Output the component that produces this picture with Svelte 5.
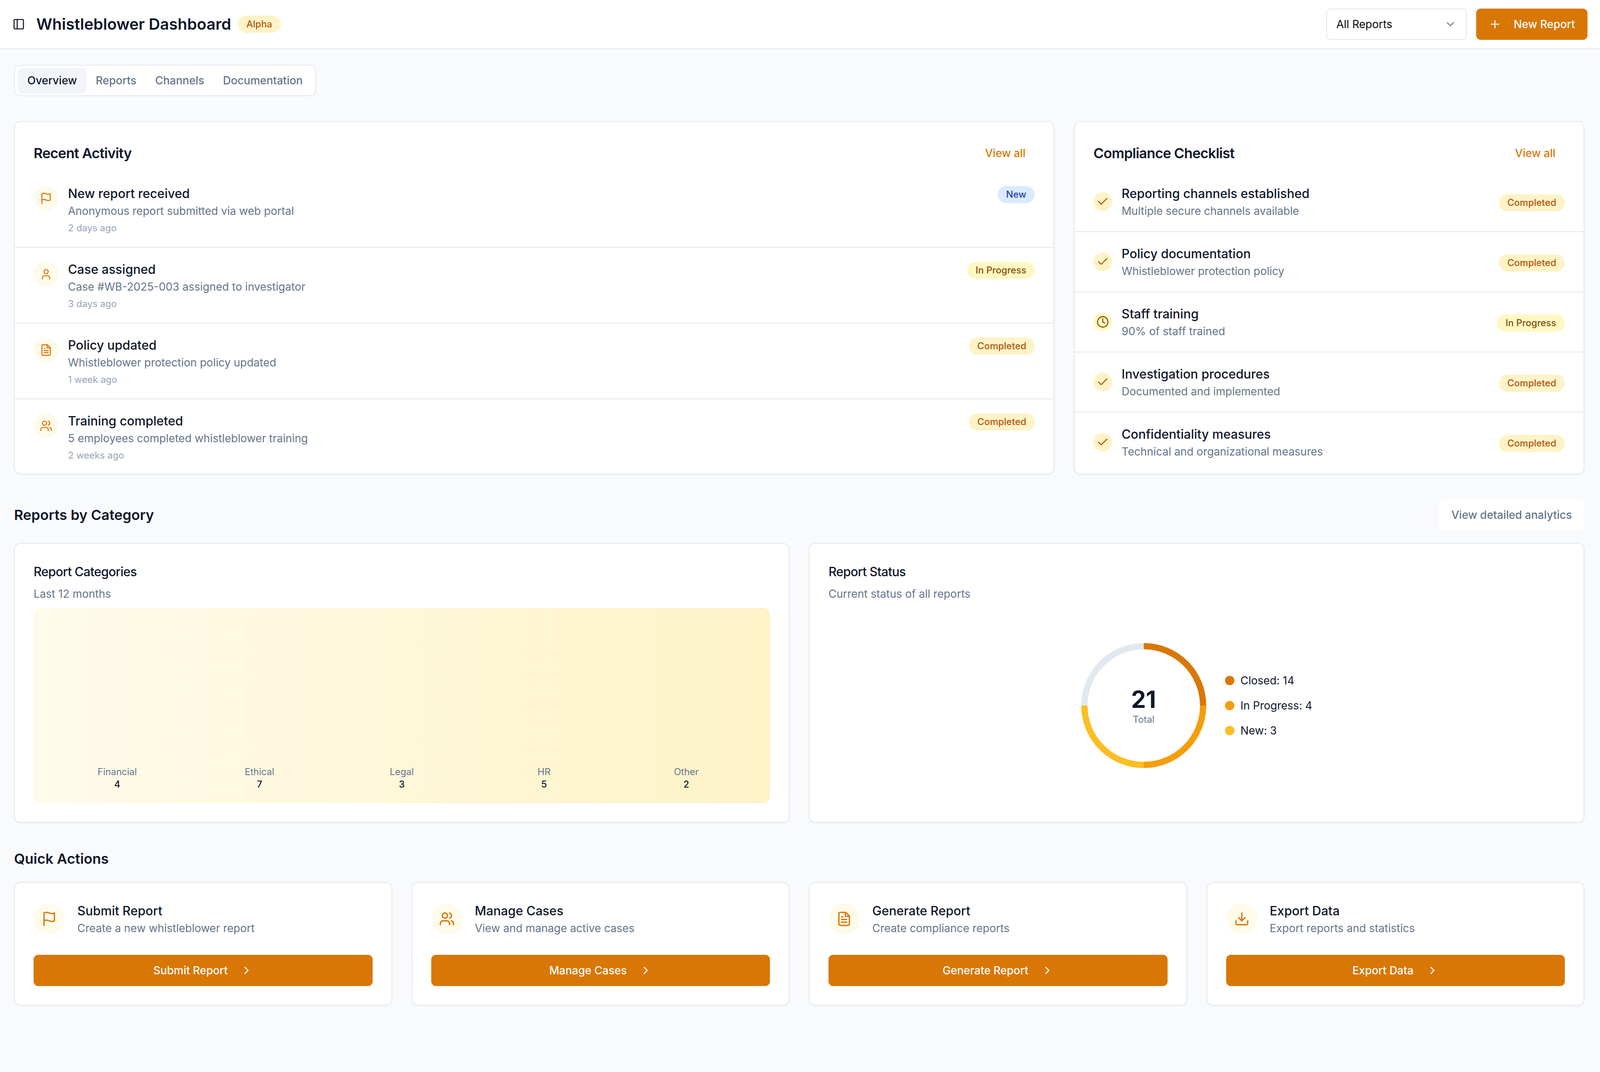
<script>
  const icons = {
    panel: '<rect width="18" height="18" x="3" y="3" rx="2"/><path d="M9 3v18"/>',
    plus: '<path d="M5 12h14"/><path d="M12 5v14"/>',
    down: '<path d="m6 9 6 6 6-6"/>',
    right: '<path d="m9 18 6-6-6-6"/>',
    flag: '<path d="M4 15s1-1 4-1 5 2 8 2 4-1 4-1V3s-1 1-4 1-5-2-8-2-4 1-4 1z"/><line x1="4" x2="4" y1="22" y2="15"/>',
    user: '<path d="M19 21v-2a4 4 0 0 0-4-4H9a4 4 0 0 0-4 4v2"/><circle cx="12" cy="7" r="4"/>',
    file: '<path d="M14.5 2H6a2 2 0 0 0-2 2v16a2 2 0 0 0 2 2h12a2 2 0 0 0 2-2V7.5L14.5 2z"/><polyline points="14 2 14 8 20 8"/><line x1="16" x2="8" y1="13" y2="13"/><line x1="16" x2="8" y1="17" y2="17"/><line x1="10" x2="8" y1="9" y2="9"/>',
    users: '<path d="M16 21v-2a4 4 0 0 0-4-4H6a4 4 0 0 0-4 4v2"/><circle cx="9" cy="7" r="4"/><path d="M22 21v-2a4 4 0 0 0-3-3.87"/><path d="M16 3.13a4 4 0 0 1 0 7.75"/>',
    check: '<polyline points="20 6 9 17 4 12"/>',
    clock: '<circle cx="12" cy="12" r="10"/><polyline points="12 6 12 12 16 14"/>',
    download: '<path d="M21 15v4a2 2 0 0 1-2 2H5a2 2 0 0 1-2-2v-4"/><polyline points="7 10 12 15 17 10"/><line x1="12" x2="12" y1="15" y2="3"/>'
  };

  const tabs = ['Overview', 'Reports', 'Channels', 'Documentation'];

  const activity = [
    { icon: 'flag', title: 'New report received', desc: 'Anonymous report submitted via web portal', time: '2 days ago', status: 'New' },
    { icon: 'user', title: 'Case assigned', desc: 'Case #WB-2025-003 assigned to investigator', time: '3 days ago', status: 'In Progress' },
    { icon: 'file', title: 'Policy updated', desc: 'Whistleblower protection policy updated', time: '1 week ago', status: 'Completed' },
    { icon: 'users', title: 'Training completed', desc: '5 employees completed whistleblower training', time: '2 weeks ago', status: 'Completed' }
  ];

  const checklist = [
    { title: 'Reporting channels established', desc: 'Multiple secure channels available', status: 'Completed' },
    { title: 'Policy documentation', desc: 'Whistleblower protection policy', status: 'Completed' },
    { title: 'Staff training', desc: '90% of staff trained', status: 'In Progress' },
    { title: 'Investigation procedures', desc: 'Documented and implemented', status: 'Completed' },
    { title: 'Confidentiality measures', desc: 'Technical and organizational measures', status: 'Completed' }
  ];

  const categories = [
    { name: 'Financial', count: 4 },
    { name: 'Ethical', count: 7 },
    { name: 'Legal', count: 3 },
    { name: 'HR', count: 5 },
    { name: 'Other', count: 2 }
  ];

  const legend = [
    { label: 'Closed: 14', color: '#d97706' },
    { label: 'In Progress: 4', color: '#f59e0b' },
    { label: 'New: 3', color: '#fbbf24' }
  ];

  const actions = [
    { icon: 'flag', title: 'Submit Report', desc: 'Create a new whistleblower report' },
    { icon: 'users', title: 'Manage Cases', desc: 'View and manage active cases' },
    { icon: 'file', title: 'Generate Report', desc: 'Create compliance reports' },
    { icon: 'download', title: 'Export Data', desc: 'Export reports and statistics' }
  ];

  const badgeClass = (status) => status.toLowerCase().replace(' ', '-');
</script>

{#snippet icon(name)}
  <svg class="icon" viewBox="0 0 24 24" fill="none" stroke="currentColor" stroke-width="2" stroke-linecap="round" stroke-linejoin="round">
    {@html icons[name]}
  </svg>
{/snippet}

<div class="page">
  <header class="topbar">
    <div class="topbar-left">
      <span class="toggle">{@render icon('panel')}</span>
      <h1>Whistleblower Dashboard</h1>
      <span class="badge completed">Alpha</span>
    </div>
    <div class="topbar-right">
      <div class="select">
        <span>All Reports</span>
        <span class="chevron">{@render icon('down')}</span>
      </div>
      <button class="primary new-report">{@render icon('plus')} New Report</button>
    </div>
  </header>

  <main>
    <div class="tabs">
      {#each tabs as tab, i}
        <span class="tab" class:active={i === 0}>{tab}</span>
      {/each}
    </div>

    <div class="top-grid">
      <section class="card">
        <div class="card-head">
          <h2>Recent Activity</h2>
          <span class="view-all">View all</span>
        </div>
        {#each activity as item}
          <div class="row activity-row">
            <span class="circle activity-icon">{@render icon(item.icon)}</span>
            <div class="row-text">
              <div class="row-title">{item.title}</div>
              <div class="row-desc">{item.desc}</div>
              <div class="row-time">{item.time}</div>
            </div>
            <span class="badge {badgeClass(item.status)}">{item.status}</span>
          </div>
        {/each}
      </section>

      <section class="card">
        <div class="card-head">
          <h2>Compliance Checklist</h2>
          <span class="view-all">View all</span>
        </div>
        {#each checklist as item}
          <div class="row check-row">
            <span class="circle check-icon" class:pending={item.status === 'In Progress'}>
              {@render icon(item.status === 'In Progress' ? 'clock' : 'check')}
            </span>
            <div class="row-text">
              <div class="row-title">{item.title}</div>
              <div class="row-desc">{item.desc}</div>
            </div>
            <span class="badge {badgeClass(item.status)}">{item.status}</span>
          </div>
        {/each}
      </section>
    </div>

    <div class="section-head">
      <h3>Reports by Category</h3>
      <button class="outline">View detailed analytics</button>
    </div>

    <div class="chart-grid">
      <section class="card chart-card">
        <div class="chart-title">Report Categories</div>
        <div class="chart-sub">Last 12 months</div>
        <div class="bars">
          {#each categories as cat}
            <div class="bar-col">
              <div class="bar-label">{cat.name}</div>
              <div class="bar-value">{cat.count}</div>
            </div>
          {/each}
        </div>
      </section>

      <section class="card chart-card">
        <div class="chart-title">Report Status</div>
        <div class="chart-sub">Current status of all reports</div>
        <div class="status-area">
          <div class="donut">
            <div class="donut-inner">
              <div class="donut-num">21</div>
              <div class="donut-label">Total</div>
            </div>
          </div>
          <div class="legend">
            {#each legend as entry}
              <div class="legend-item">
                <span class="dot" style="background: {entry.color}"></span>
                {entry.label}
              </div>
            {/each}
          </div>
        </div>
      </section>
    </div>

    <h3 class="quick-head">Quick Actions</h3>

    <div class="quick-grid">
      {#each actions as action}
        <section class="card quick-card">
          <div class="quick-top">
            <span class="circle quick-icon">{@render icon(action.icon)}</span>
            <div>
              <div class="row-title">{action.title}</div>
              <div class="row-desc">{action.desc}</div>
            </div>
          </div>
          <button class="primary quick-btn">{action.title} {@render icon('right')}</button>
        </section>
      {/each}
    </div>
  </main>
</div>

<style>
  :global(body) {
    margin: 0;
    background: #f8fafc;
    font-family: Inter, "Noto Sans", sans-serif;
    color: #0f172a;
  }

  /* no fixed width: the sandbox window reports 4096px wide, not 4436px, so the grids follow the window */
  .page { min-height: 2744px; }
  h1, h2, h3 { margin: 0; }
  button { font-family: inherit; cursor: pointer; }

  .icon { width: 32px; height: 32px; display: block; flex: none; }

  .topbar {
    height: 124px;
    background: #fff;
    border-bottom: 2px solid #e4e4e7;
    display: flex;
    align-items: center;
    justify-content: space-between;
    padding: 0 32px;
  }
  .topbar-left { display: flex; align-items: center; }
  .toggle { margin-right: 29px; }
  h1 { font-size: 40px; line-height: 56px; font-weight: 600; margin-right: 17px; }
  .topbar-right { display: flex; align-items: center; gap: 24px; }

  .select {
    box-sizing: border-box;
    width: 360px;
    height: 80px;
    border: 2px solid #e2e8f0;
    border-radius: 12px;
    background: #fff;
    padding: 0 24px;
    font-size: 28px;
    color: #0a0a0a;
    display: flex;
    align-items: center;
    justify-content: space-between;
  }
  .chevron { opacity: 0.5; }

  .primary {
    background: #d97706;
    color: #fff;
    border: none;
    border-radius: 12px;
    height: 80px;
    font-size: 28px;
    font-weight: 500;
    display: flex;
    align-items: center;
    justify-content: center;
    gap: 32px;
  }
  .new-report { padding: 0 32px; }

  main { padding: 40px 40px 0 36px; }

  .tabs {
    box-sizing: border-box;
    display: inline-flex;
    height: 80px;
    padding: 6px 8px;
    background: #fff;
    border: 2px solid #e2e8f0;
    border-radius: 16px;
    vertical-align: top;
  }
  .tab {
    padding: 0 24px;
    height: 64px;
    line-height: 64px;
    font-size: 28px;
    font-weight: 500;
    color: #64748b;
    border-radius: 12px;
  }
  .tab.active {
    background: #f1f5f9;
    color: #0f172a;
    box-shadow: 0 2px 4px rgba(15, 23, 42, 0.05);
  }

  .card {
    box-sizing: border-box;
    background: #fff;
    border: 2px solid #e2e8f0;
    border-radius: 16px;
    box-shadow: 0 2px 4px rgba(15, 23, 42, 0.04);
  }

  .top-grid {
    display: grid;
    grid-template-columns: repeat(3, 1fr);
    gap: 50px;
    margin-top: 64px;
  }
  .top-grid .card:first-child { grid-column: span 2; }

  .card-head {
    display: flex;
    align-items: center;
    justify-content: space-between;
    height: 64px;
    padding: 48px 48px 16px;
  }
  h2 { font-size: 36px; line-height: 56px; font-weight: 600; letter-spacing: -0.025em; }
  .view-all {
    padding: 0 24px;
    font-size: 28px;
    font-weight: 500;
    color: #d97706;
  }

  .row {
    display: flex;
    padding: 32px 48px;
    border-bottom: 2px solid #e2e8f0;
  }
  .row:last-child { border-bottom: none; }
  .row-text { flex: 1; min-width: 0; }
  .row-title { font-size: 32px; line-height: 48px; font-weight: 500; }
  .row-desc { font-size: 28px; line-height: 40px; color: #64748b; }
  .row-time { font-size: 24px; line-height: 32px; color: #94a3b8; margin-top: 8px; }

  .activity-row { align-items: flex-start; gap: 24px; }
  .activity-row:last-child { padding-bottom: 30px; }
  .activity-row .badge { margin-top: 4px; }
  .check-row { align-items: center; gap: 24px; }
  .check-row .badge { margin-top: 6px; }

  .circle {
    border-radius: 50%;
    display: flex;
    align-items: center;
    justify-content: center;
    flex: none;
  }
  .activity-icon {
    width: 64px;
    height: 64px;
    margin-top: 4px;
    background: #fffbeb;
    color: #d97706;
  }
  .check-icon {
    width: 48px;
    height: 48px;
    background: #fef3c7;
    color: #b45309;
  }
  .check-icon.pending { background: #fef9c3; color: #854d0e; }

  .badge {
    box-sizing: border-box;
    height: 44px;
    line-height: 40px;
    padding: 0 20px;
    border: 2px solid transparent;
    border-radius: 22px;
    font-size: 24px;
    font-weight: 500;
    flex: none;
    white-space: nowrap;
  }
  .badge.new { background: #dbeafe; color: #1e40af; }
  .badge.in-progress { background: #fef9c3; color: #854d0e; }
  .badge.completed { background: #fef3c7; color: #b45309; }

  .section-head {
    display: flex;
    align-items: center;
    justify-content: space-between;
    margin-top: 64px;
    margin-bottom: 32px;
  }
  h3 { font-size: 36px; line-height: 56px; font-weight: 600; }
  .outline {
    height: 80px;
    padding: 0 32px;
    background: #fff;
    border: none;
    border-radius: 14px;
    font-size: 28px;
    font-weight: 500;
    color: #64748b;
  }

  .chart-grid {
    display: grid;
    grid-template-columns: 1fr 1fr;
    gap: 50px;
  }
  .chart-card { padding: 48px; }
  .chart-title { font-size: 32px; line-height: 48px; font-weight: 500; letter-spacing: -0.025em; }
  .chart-sub { font-size: 28px; line-height: 40px; color: #64748b; margin-top: 12px; margin-bottom: 16px; }

  .bars {
    box-sizing: border-box;
    height: 500px;
    padding: 32px;
    display: flex;
    align-items: flex-end;
    border-radius: 16px;
    background: linear-gradient(to right, #fffbeb, #fef3c7);
  }
  .bar-col { flex: 1; text-align: center; }
  .bar-label { font-size: 24px; line-height: 32px; color: #64748b; }
  .bar-value { font-size: 24px; line-height: 32px; font-weight: 500; }

  .status-area {
    height: 500px;
    display: flex;
    align-items: center;
    justify-content: center;
    gap: 48px;
  }
  .donut {
    width: 320px;
    height: 320px;
    border-radius: 50%;
    background: conic-gradient(#d97706 0 25%, #f59e0b 25% 50%, #fbbf24 50% 75%, #e2e8f0 75% 100%);
    display: flex;
    align-items: center;
    justify-content: center;
  }
  .donut-inner {
    width: 288px;
    height: 288px;
    border-radius: 50%;
    background: #fff;
    display: flex;
    flex-direction: column;
    align-items: center;
    justify-content: center;
  }
  .donut-num { font-size: 60px; line-height: 72px; font-weight: 700; }
  .donut-label { font-size: 24px; line-height: 32px; color: #64748b; }

  .legend { display: flex; flex-direction: column; gap: 24px; }
  .legend-item {
    display: flex;
    align-items: center;
    gap: 16px;
    font-size: 28px;
    line-height: 40px;
  }
  .dot { width: 24px; height: 24px; border-radius: 50%; }

  .quick-head { margin-top: 64px; margin-bottom: 32px; }
  .quick-grid {
    display: grid;
    grid-template-columns: repeat(4, 1fr);
    gap: 50px;
  }
  .quick-card { padding: 48px; }
  .quick-top { display: flex; align-items: center; gap: 32px; margin-bottom: 48px; }
  .quick-icon {
    width: 80px;
    height: 80px;
    background: #fffbeb;
    color: #d97706;
  }
  .quick-icon .icon { width: 40px; height: 40px; }
  .quick-btn { width: 100%; }
</style>
